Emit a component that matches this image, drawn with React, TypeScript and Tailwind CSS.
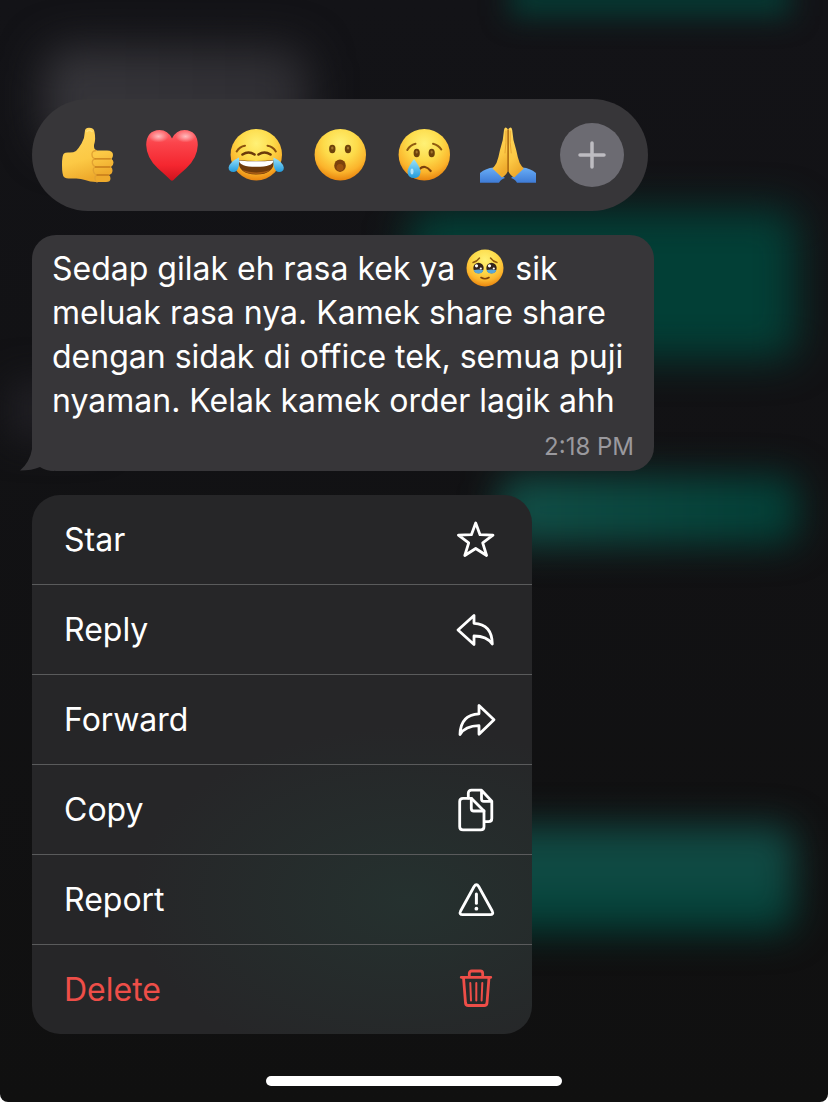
import type { ReactNode } from 'react';

function Defs() {
  return (
    <svg width="0" height="0" className="absolute" aria-hidden="true">
      <defs>
        <radialGradient id="face" cx="0.5" cy="0.28" r="0.72">
          <stop offset="0" stopColor="#fff176" />
          <stop offset="0.45" stopColor="#fddb4a" />
          <stop offset="0.78" stopColor="#fbb42c" />
          <stop offset="1" stopColor="#e8850f" />
        </radialGradient>
        <linearGradient id="skin" x1="0" y1="0" x2="0.3" y2="1">
          <stop offset="0" stopColor="#ffd65c" />
          <stop offset="0.65" stopColor="#fcc945" />
          <stop offset="1" stopColor="#eeaa2c" />
        </linearGradient>
        <linearGradient id="heart" x1="0" y1="0" x2="0" y2="1">
          <stop offset="0" stopColor="#ff6b70" />
          <stop offset="0.25" stopColor="#fb454c" />
          <stop offset="0.7" stopColor="#f4262f" />
          <stop offset="1" stopColor="#d0121d" />
        </linearGradient>
        <linearGradient id="tear" x1="0" y1="0" x2="0" y2="1">
          <stop offset="0" stopColor="#9be3fb" />
          <stop offset="1" stopColor="#229bdc" />
        </linearGradient>
        <linearGradient id="sleeve" x1="0" y1="0" x2="0" y2="1">
          <stop offset="0" stopColor="#69aef7" />
          <stop offset="1" stopColor="#3e7bd6" />
        </linearGradient>
        <radialGradient id="shine">
          <stop offset="0" stopColor="#fff" stopOpacity="0.6" />
          <stop offset="1" stopColor="#fff" stopOpacity="0" />
        </radialGradient>
      </defs>
    </svg>
  );
}

function Emoji({ children }: { children: ReactNode }) {
  return (
    <svg viewBox="0 0 56 56" className="size-14" fill="none" strokeLinecap="round" strokeLinejoin="round" aria-hidden="true">
      {children}
    </svg>
  );
}

const face = <circle cx="28.3" cy="27.7" r="25.7" fill="url(#face)" />;

const reactions = [
  {
    name: 'Thumbs up',
    art: (
      <>
        <path d="M4 26.5Q2 28 2 38T4 50Q6 52 14 51.5Q20 51 25 53Q30 55 36 55H46Q50.5 55 50.5 51.5Q50.5 49 49 48Q52.500 47 52.500 43.500Q52.500 41 51 40Q53.500 38.500 53.500 35.500Q53.500 33 51.500 32Q53 30.500 53 28Q53 23.500 47 23.500H37Q33.500 22.500 34 18Q36 12 34.500 5Q34 .8 29 .8Q24.800 .8 24.800 5Q24.800 11 21.500 16.500Q18.500 21.500 16 24Q13 26 8 25.500Q5 25.500 4 26.500Z" fill="url(#skin)" />
        <path d="M36 23.500Q31.500 24 32 28Q32 31 35 31.800Q31.500 33 32.500 36.500Q33 39 35.500 40Q32.500 41 33.500 44.500Q34 47.200 37 48Q34.500 49 35 52Q35.300 54 37 55" stroke="#e2a232" strokeWidth="1.300" />
        <path d="M35 31.800H50.500M35.500 40H50M37 48H48.500" stroke="#c67c1a" strokeWidth="1.300" />
        <path d="M27 4.500Q29 2 32 4.500" stroke="#ffe07a" strokeWidth="1.500" />
      </>
    ),
  },
  {
    name: 'Heart',
    art: (
      <>
        <path d="M28 11.500Q24 3 15.500 3Q2.500 3.500 2.200 18Q2.500 31 14 41.500Q22 48.500 26.500 53Q28 54.500 29.500 53Q34 48.500 42 41.500Q53.500 31 53.800 18Q53.500 3.500 40.500 3Q32 3 28 11.500Z" fill="url(#heart)" />
        <ellipse cx="14.500" cy="9.500" rx="10" ry="6" fill="url(#shine)" />
        <ellipse cx="41.500" cy="9.500" rx="10" ry="6" fill="url(#shine)" />
      </>
    ),
  },
  {
    name: 'Tears of joy',
    art: (
      <>
        {face}
        <path d="M8.700 24.500Q11.500 19.500 17 18.700M39.500 18.700Q45 19.500 47.800 24.500" stroke="#8a500e" strokeWidth="2" />
        <path d="M14.500 27.500Q20.500 23.500 26.500 27.500M30.500 27.500Q36.500 23.500 42.500 27.500" stroke="#6b3a0a" strokeWidth="2.600" />
        <path d="M10.500 33Q28 35 46 33Q46.500 47.500 28.300 47.500Q10 47.500 10.500 33Z" fill="#6e3a0b" />
        <path d="M11 33.400Q28 35.300 45.500 33.400Q45 39.800 28.300 39.800Q11.500 39.800 11 33.400Z" fill="#fff" />
        <path d="M14 43Q28.300 47.800 42.500 43Q37.500 47 28.300 47Q19 47 14 43Z" fill="#a85c14" />
        <path d="M11 30.500Q12 44.800 5.500 45Q.5 44.800 .6 40.500Q1.500 35 11 30.500Z" fill="url(#tear)" />
        <path d="M45.500 30.500Q44.500 44.800 51 45Q56 44.800 55.800 40.500Q55 35 45.500 30.500Z" fill="url(#tear)" />
      </>
    ),
  },
  {
    name: 'Surprised',
    art: (
      <>
        {face}
        <ellipse cx="20.300" cy="22" rx="3.200" ry="4.200" fill="#6d420b" />
        <ellipse cx="36" cy="22" rx="3.200" ry="4.200" fill="#6d420b" />
        <ellipse cx="20.300" cy="21" rx="1.200" ry="1.500" fill="#a3752b" />
        <ellipse cx="36" cy="21" rx="1.200" ry="1.500" fill="#a3752b" />
        <ellipse cx="28" cy="38.700" rx="5.800" ry="6.200" fill="#7c410c" />
        <ellipse cx="28" cy="40.500" rx="3.500" ry="3.500" fill="#9b5310" />
      </>
    ),
  },
  {
    name: 'Crying',
    art: (
      <>
        {face}
        <path d="M11.300 23Q14 18 19.500 16.700M37 16.700Q42.500 18 45.300 22.500" stroke="#8f5a10" strokeWidth="2" />
        <ellipse cx="20.700" cy="26" rx="3.100" ry="4.300" fill="#6d420b" />
        <ellipse cx="35.700" cy="26" rx="3.100" ry="4.300" fill="#6d420b" />
        <ellipse cx="20.700" cy="25" rx="1.100" ry="1.500" fill="#a3752b" />
        <ellipse cx="35.700" cy="25" rx="1.100" ry="1.500" fill="#a3752b" />
        <path d="M23.500 42Q29 37 34.700 44" stroke="#7c410c" strokeWidth="2.200" />
        <path d="M18 32Q11.500 40.500 11.500 45Q12 51 18 51Q24 51 24.500 45Q24.500 40.500 18 32Z" fill="url(#tear)" />
        <ellipse cx="16" cy="44.500" rx="1.500" ry="3" fill="#dff7ff" opacity="0.700" />
      </>
    ),
  },
  {
    name: 'Folded hands',
    art: (
      <>
        <path d="M0 46Q6 41 13.500 40.500L25 51Q21 52 19 55.800H0Z" fill="url(#sleeve)" />
        <path d="M56 46Q50 41 42.500 40.500L31 51Q35 52 37 55.800H56Z" fill="url(#sleeve)" />
        <path d="M28.100 2.500Q25 -1.500 24 3Q23.500 13 20 23Q18.500 31 16.500 36Q14.500 39.500 12.500 41.500L22 50.500Q27 48 28.100 43Z" fill="url(#skin)" />
        <path d="M28.100 2.500Q31.200 -1.500 32.200 3Q32.700 13 36.200 23Q37.700 31 39.700 36Q41.700 39.500 43.700 41.500L34.200 50.500Q29.200 48 28.100 43Z" fill="url(#skin)" />
        <path d="M28.100 3V44" stroke="#a8650f" strokeWidth="1.500" />
        <path d="M26 4Q26.500 16 25 26M30.200 4Q29.700 16 31.200 26" stroke="#e9a531" strokeWidth="1" />
      </>
    ),
  },
];

function PleadingFace() {
  return (
    <svg viewBox="0 0 40 40" className="-mt-1 mx-px inline-block size-10 align-middle" fill="none" strokeLinecap="round" role="img" aria-label="Face holding back tears">
      <circle cx="20" cy="19" r="18.500" fill="url(#face)" />
      <path d="M8 13.500Q12 12.500 14.500 9M25.500 9Q28 12.500 32 13.500" stroke="#8f5a10" strokeWidth="1.400" />
      <circle cx="13.500" cy="19" r="5.200" fill="#33231c" />
      <circle cx="26.500" cy="19" r="5.200" fill="#33231c" />
      <path d="M8.700 21Q13.500 20 18.300 21Q17.500 24.500 13.500 24.500T8.700 21ZM21.700 21Q26.500 20 31.300 21Q30.500 24.500 26.500 24.500T21.700 21Z" fill="#5aa6d6" />
      <circle cx="11.500" cy="16.800" r="1.600" fill="#fff" />
      <circle cx="15.800" cy="19.500" r="1.100" fill="#fff" />
      <circle cx="24.500" cy="16.800" r="1.600" fill="#fff" />
      <circle cx="28.800" cy="19.500" r="1.100" fill="#fff" />
      <path d="M16 28.500Q20 31 24 28.500" stroke="#7c410c" strokeWidth="1.600" />
    </svg>
  );
}

const actions = [
  { label: 'Star', art: <path d="M19.700 3L24 14.700L37 15.200L26.700 22.900L30.600 35.500L19.700 28.500L8.800 35.500L12.700 22.900L2.400 15.200L15.400 14.700Z" /> },
  { label: 'Reply', art: <path d="M2 20L18 5.500V13.300Q36 14 36.300 34Q31 26 18 26V34.500Z" /> },
  { label: 'Forward', art: <path d="M38 19.700L23 5.500V13.800Q4.500 14.500 4 34.500Q9 26 23 25.700V34.300Z" /> },
  {
    label: 'Copy',
    art: (
      <>
        <path d="M15.300 8.300H7Q3.700 8.300 3.700 11.500V36.700Q3.700 39.800 7 39.800H24.800Q28 39.800 28 36.700V21Z" />
        <path d="M15.300 8.300V18.500Q15.300 21 17.800 21H28" />
        <path d="M12.300 8V3.300Q12.300 .2 15.500 .2H25.500L35.800 11.300V28.500Q35.800 31.700 32.500 31.700H28.500M25.500 .500V9Q25.500 11.300 27.800 11.300H35.500" />
      </>
    ),
  },
  {
    label: 'Report',
    art: (
      <>
        <path d="M18.100 6.500Q20.400 3 22.700 6.500L36.200 31Q38 34.700 34 34.700H6.800Q2.800 34.700 4.600 31Z" />
        <path d="M20.400 14V23.300" strokeWidth="3" />
        <circle cx="20.400" cy="28.700" r="1.900" fill="currentColor" stroke="none" />
      </>
    ),
  },
  {
    label: 'Delete',
    danger: true,
    art: (
      <>
        <path d="M5.200 7.300H34.800M13.300 7V3.500Q13.300 1 15.800 1H24.300Q26.700 1 26.700 3.500V7M7.500 7.500L9.500 33Q9.800 35.500 12.300 35.500H28.200Q30.700 35.500 31 33L33 7.500" />
        <path d="M14.300 13L15 30.500M20.300 13V30.500M26.300 13L25.600 30.500" strokeWidth="2" />
      </>
    ),
  },
];

function Backdrop() {
  return (
    <div className="absolute inset-0 overflow-hidden" aria-hidden="true">
      <div className="absolute top-[48px] left-[44px] h-[100px] w-[264px] rounded-3xl bg-linear-to-r from-[#37363b] to-[#2f2e33] blur-[22px]" />
      <div className="absolute top-[380px] left-[8px] h-[60px] w-[90px] bg-[#1f1e23] blur-[18px]" />
      <div className="absolute -top-[20px] right-[38px] left-[510px] h-[36px] bg-[#053b34] blur-[14px]" />
      <div className="absolute top-[210px] right-[32px] left-[410px] h-[148px] rounded-2xl bg-[#023f36] blur-[20px]" />
      <div className="absolute top-[476px] right-[30px] left-[500px] h-[68px] rounded-2xl bg-linear-to-r from-[#125048] to-[#023f36] blur-[18px]" />
      <div className="absolute top-[826px] right-[34px] left-[300px] h-[106px] rounded-2xl bg-linear-to-b from-[#114a44] via-[#0f4a43] to-[#003e35] blur-[18px]" />
    </div>
  );
}

export default function App() {
  return (
    <div className="min-h-screen bg-white">
      <Defs />
      <main className="relative isolate flex min-h-screen flex-col items-start overflow-hidden rounded-b-lg bg-linear-to-b from-[#131317] to-[#101010] px-8 pt-[99px] pb-4 font-['Inter',sans-serif] text-white">
        <Backdrop />

        <div className="relative flex h-28 items-center gap-5 rounded-full bg-[#373639] px-6">
          {reactions.map((r) => (
            <button key={r.name} type="button" aria-label={r.name} className="flex size-16 items-center justify-center">
              <Emoji>{r.art}</Emoji>
            </button>
          ))}
          <button type="button" aria-label="More reactions" className="flex size-16 items-center justify-center rounded-full bg-[#6c6b72]">
            <svg viewBox="0 0 28 28" className="size-7" stroke="#bdbcc1" strokeWidth="3.500" strokeLinecap="round" aria-hidden="true">
              <path d="M14 2V26M2 14H26" />
            </svg>
          </button>
        </div>

        <div className="relative mt-6 w-full max-w-[622px] rounded-3xl bg-[#373639] px-5 pt-3 pb-2">
          <svg viewBox="0 0 40 32" className="absolute bottom-0 -left-3 h-8 w-10" fill="#373639" aria-hidden="true">
            <path d="M12 0V10Q10 23 0 31.500Q12 31.500 20 28Q26 32 34 32V0Z" />
          </svg>
          <p className="relative text-[32px] leading-[44px]">
            Sedap gilak eh rasa kek ya <PleadingFace /> sik meluak rasa nya. Kamek share share dengan sidak di office tek, semua puji nyaman. Kelak kamek order lagik ahh
          </p>
          <time className="relative mt-2 block text-right text-2xl text-[#9a999e]">2:18 PM</time>
        </div>

        <div role="menu" className="relative mt-6 w-full max-w-[500px] divide-y divide-[#5a5b5c] overflow-hidden rounded-[28px] bg-[#262628] bg-radial-[ellipse_55%_32%_at_75%_75%] from-[#25312f] to-[#262628]">
          {actions.map((a) => (
            <button
              key={a.label}
              type="button"
              role="menuitem"
              className={`flex h-[90px] w-full items-center justify-between pr-9 pl-8 text-[32px] leading-[44px] last:h-[89px] ${a.danger ? 'text-[#ee4e48]' : 'text-white'}`}
            >
              {a.label}
              <svg viewBox="0 -2 40 44" className="h-11 w-10" fill="none" stroke="currentColor" strokeWidth="2.800" strokeLinecap="round" strokeLinejoin="round" aria-hidden="true">
                {a.art}
              </svg>
            </button>
          ))}
        </div>

        <div className="relative mx-auto mt-auto h-[10px] w-[296px] rounded-full bg-white" />
      </main>
    </div>
  );
}
